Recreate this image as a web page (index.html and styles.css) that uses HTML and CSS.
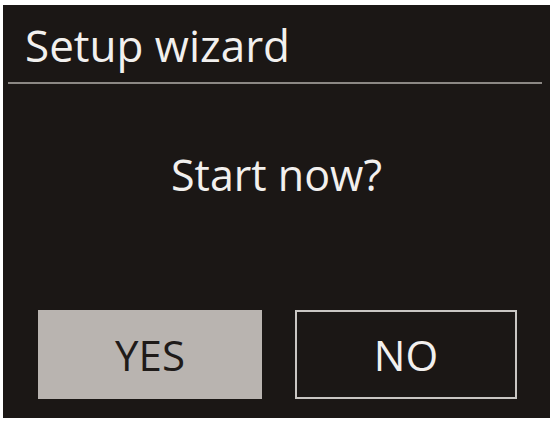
FILE: index.html
```html
<!DOCTYPE html>
<html>
<head>
<meta charset="utf-8">
<link rel="stylesheet" href="styles.css">
</head>
<body>
<div class="screen">
  <div class="title">Setup wizard</div>
  <div class="rule"></div>
  <div class="question">Start now?</div>
  <div class="buttons">
    <div class="btn yes">YES</div>
    <div class="btn no">NO</div>
  </div>
</div>
</body>
</html>
```
FILE: styles.css
```css
html, body {
  margin: 0;
  padding: 0;
  background: #ffffff;
}
body {
  width: 554px;
  height: 421px;
  overflow: hidden;
}
.screen {
  margin: 5px 0 0 3px;
  width: 547px;
  height: 413px;
  background: #1b1715;
  display: flex;
  flex-direction: column;
  font-family: "Open Sans", "Noto Sans", sans-serif;
  color: #f2f0ee;
  box-sizing: border-box;
}
.title {
  height: 77px;
  padding: 3px 0 0 22px;
  font-size: 44px;
  line-height: 74px;
  box-sizing: border-box;
}
.rule {
  height: 2px;
  margin: 0 8px 0 5px;
  background: #8c8884;
}
.question {
  height: 149px;
  padding-top: 61px;
  box-sizing: border-box;
  text-align: center;
  font-size: 43px;
  line-height: 60px;
}
.buttons {
  display: flex;
  gap: 33px;
  padding-left: 35px;
  margin-top: 77px;
}
.btn {
  height: 89px;
  display: flex;
  align-items: center;
  justify-content: center;
  font-size: 42px;
  box-sizing: border-box;
}
.yes {
  width: 224px;
  background: #b9b4b0;
  color: #1f1b19;
}
.no {
  width: 222px;
  border: 2px solid #c9c6c3;
  color: #f2f0ee;
}
```
